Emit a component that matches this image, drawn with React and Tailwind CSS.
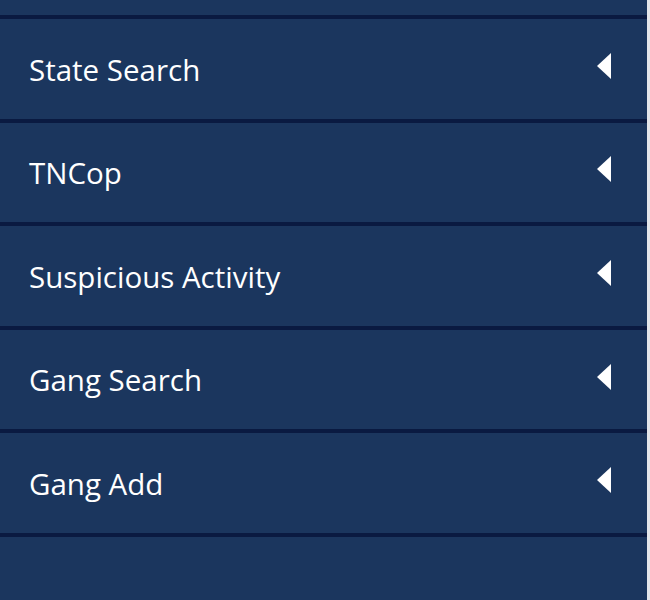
const items = ["State Search", "TNCop", "Suspicious Activity", "Gang Search", "Gang Add"];

function Caret() {
  return (
    <svg width="14" height="26" viewBox="0 0 14 26" className="shrink-0 mb-[6px]">
      <polygon points="14,0 14,26 0,13" fill="#ffffff" />
    </svg>
  );
}

export default function App() {
  return (
    <div className="w-[650px] h-[600px] flex bg-[#e4e6ea]">
      <div className="w-[647px] h-full flex flex-col bg-[#1b365e]" style={{ fontFamily: '"Open Sans", "Noto Sans", sans-serif' }}>
        <div className="h-[15px] shrink-0" />
        {items.map((label) => (
          <div
            key={label}
            className="h-[103.6px] shrink-0 border-t-4 border-[#0a1a41] flex items-center justify-between pl-[29px] pr-[36px]"
          >
            <span className="text-[29.5px] leading-none text-white pt-[1px]">{label}</span>
            <Caret />
          </div>
        ))}
        <div className="flex-1 border-t-4 border-[#0a1a41]" />
      </div>
    </div>
  );
}
